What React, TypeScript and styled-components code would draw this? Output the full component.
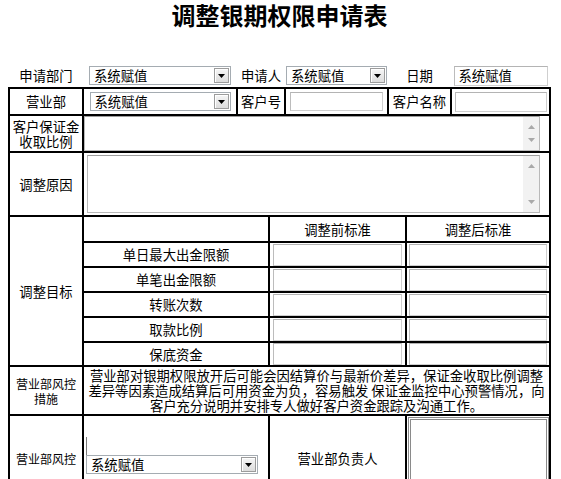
import * as React from 'react';
import styled, { createGlobalStyle } from 'styled-components';

const GlobalStyle = createGlobalStyle`
  html, body {
    margin: 0;
    padding: 0;
    background: #fff;
  }
  body {
    font-family: "Noto Sans CJK SC", "Liberation Sans", sans-serif;
    font-size: 13.33px;
    color: #000;
  }
`;

const SIX_COLS = '74px 154px 48px 103px 63px 99px';
const FOUR_COLS = '74px 186px 137px 144px';
const TWO_COLS = '74px 467px';

const StyledPage = styled.div`
  width: 543px;
  padding: 3px 8px 0;
`;

const StyledTitle = styled.h1`
  margin: 0 0 37px;
  height: 24px;
  line-height: 24px;
  font-size: 24px;
  font-weight: bold;
  text-align: center;
`;

const StyledHeadRow = styled.div`
  display: grid;
  grid-template-columns: ${SIX_COLS};
  grid-auto-rows: 23px;
  padding: 0 1px;
`;

const StyledHeadCell = styled.div`
  display: flex;
  align-items: center;
  justify-content: center;
  white-space: nowrap;
`;

const StyledSheet = styled.div`
  border: 1px solid #000;
`;

const StyledRow = styled.div<{ $cols: string; $rows: string }>`
  display: grid;
  grid-template-columns: ${(p) => p.$cols};
  grid-template-rows: ${(p) => p.$rows};
`;

const StyledCell = styled.div<{
  $justify?: 'flex-start' | 'center';
  $align?: 'flex-start' | 'center';
  $small?: boolean;
  $span?: number;
}>`
  border: 1px solid #000;
  display: flex;
  align-items: ${(p) => p.$align || 'center'};
  justify-content: ${(p) => p.$justify || 'center'};
  text-align: center;
  line-height: 15px;
  font-size: ${(p) => (p.$small ? '12px' : '13.33px')};
  min-width: 0;
  overflow: hidden;
  ${(p) => (p.$span ? `grid-row: span ${p.$span};` : '')}
`;

const StyledNotice = styled.p`
  margin: 0;
  line-height: 15px;
  white-space: nowrap;
`;

const StyledSelectBox = styled.div<{ $w: number }>`
  display: flex;
  width: ${(p) => p.$w}px;
  height: 19px;
  box-sizing: border-box;
  border: 1px solid #a5acb2;
  background: #fff;
`;

const StyledSelect = styled.select`
  flex: 1;
  min-width: 0;
  appearance: none;
  border: none;
  outline: none;
  background: transparent;
  padding: 0 0 0 4px;
  margin: 0;
  font: inherit;
  font-size: 13.33px;
  line-height: 17px;
  color: #000;
`;

const StyledDropButton = styled.span`
  width: 15px;
  margin: 1px;
  box-sizing: border-box;
  border: 1px solid #9c9c9c;
  background: linear-gradient(#f6f6f6, #dcdcdc);
  box-shadow: inset 1px 1px 0 #fff;
  display: flex;
  align-items: center;
  justify-content: center;
`;

const StyledTextField = styled.input<{ $w: number; $h: number }>`
  width: ${(p) => p.$w}px;
  height: ${(p) => p.$h}px;
  box-sizing: border-box;
  margin: 0;
  padding: 0 4px;
  border: 1px solid #cfcfcf;
  border-top-color: #b4b4b4;
  border-left-color: #bcbcbc;
  font: inherit;
  font-size: 13.33px;
  color: #000;
  outline: none;
`;

const StyledMemo = styled.div<{ $w: number; $h: number; $ml: number }>`
  display: flex;
  width: ${(p) => p.$w}px;
  height: ${(p) => p.$h}px;
  margin-left: ${(p) => p.$ml}px;
  box-sizing: border-box;
  border: 1px solid #b9b9b9;
  border-top-color: #9e9e9e;
  background: #fff;
`;

const StyledMemoInput = styled.textarea`
  flex: 1;
  border: none;
  outline: none;
  resize: none;
  overflow: hidden;
  padding: 2px;
  font: inherit;
`;

const StyledScrollTrack = styled.div`
  width: 16px;
  background: #f2f2f2;
  display: flex;
  flex-direction: column;
  align-items: center;
  justify-content: space-between;
  padding: 8px 0;
`;

const StyledPickCell = styled.div`
  display: flex;
  flex-direction: column;
  align-items: flex-start;
  width: 100%;
  padding: 0 0 5px 2px;
`;

const StyledCaret = styled.span`
  width: 1px;
  height: 18px;
  background: #7a7a7a;
`;

const StyledSignBox = styled.div`
  width: 141px;
  height: 80px;
  margin-top: 1px;
  box-sizing: border-box;
  border: 3px double #8a8a8a;
  background: #fff;
`;

const Arrow: React.FC<{ up?: boolean; color?: string }> = ({ up, color = '#000' }) => (
  <svg width="7" height="4" viewBox="0 0 7 4">
    <path d={up ? 'M0 4h7L3.5 0z' : 'M0 0h7L3.5 4z'} fill={color} />
  </svg>
);

const Select: React.FC<{ width: number }> = ({ width }) => (
  <StyledSelectBox $w={width}>
    <StyledSelect defaultValue="sys">
      <option value="sys">系统赋值</option>
    </StyledSelect>
    <StyledDropButton>
      <Arrow />
    </StyledDropButton>
  </StyledSelectBox>
);

const Memo: React.FC<{ width: number; height: number; ml: number }> = ({ width, height, ml }) => (
  <StyledMemo $w={width} $h={height} $ml={ml}>
    <StyledMemoInput />
    <StyledScrollTrack>
      <Arrow up color="#a9a9a9" />
      <Arrow color="#a9a9a9" />
    </StyledScrollTrack>
  </StyledMemo>
);

const TARGETS = ['单日最大出金限额', '单笔出金限额', '转账次数', '取款比例', '保底资金'];

export default function App() {
  return (
    <StyledPage>
      <GlobalStyle />
      <StyledTitle>调整银期权限申请表</StyledTitle>

      <StyledHeadRow>
        <StyledHeadCell>申请部门</StyledHeadCell>
        <StyledHeadCell>
          <Select width={142} />
        </StyledHeadCell>
        <StyledHeadCell>申请人</StyledHeadCell>
        <StyledHeadCell>
          <Select width={101} />
        </StyledHeadCell>
        <StyledHeadCell>日期</StyledHeadCell>
        <StyledHeadCell>
          <StyledTextField $w={94} $h={20} defaultValue="系统赋值" />
        </StyledHeadCell>
      </StyledHeadRow>

      <StyledSheet>
        <StyledRow $cols={SIX_COLS} $rows="27px">
          <StyledCell>营业部</StyledCell>
          <StyledCell>
            <Select width={141} />
          </StyledCell>
          <StyledCell>客户号</StyledCell>
          <StyledCell>
            <StyledTextField $w={93} $h={19} />
          </StyledCell>
          <StyledCell>客户名称</StyledCell>
          <StyledCell>
            <StyledTextField $w={92} $h={20} />
          </StyledCell>
        </StyledRow>

        <StyledRow $cols={TWO_COLS} $rows="37px">
          <StyledCell>
            客户保证金
            <br />
            收取比例
          </StyledCell>
          <StyledCell $justify="flex-start">
            <Memo width={456} height={35} ml={0} />
          </StyledCell>
        </StyledRow>

        <StyledRow $cols={TWO_COLS} $rows="64px">
          <StyledCell>调整原因</StyledCell>
          <StyledCell $justify="flex-start">
            <Memo width={453} height={58} ml={3} />
          </StyledCell>
        </StyledRow>

        <StyledRow $cols={FOUR_COLS} $rows="26px 25px 25px 25px 25px 24px">
          <StyledCell $span={6}>调整目标</StyledCell>
          <StyledCell />
          <StyledCell>调整前标准</StyledCell>
          <StyledCell>调整后标准</StyledCell>
          {TARGETS.map((name) => (
            <React.Fragment key={name}>
              <StyledCell>{name}</StyledCell>
              <StyledCell>
                <StyledTextField $w={129} $h={22} />
              </StyledCell>
              <StyledCell>
                <StyledTextField $w={138} $h={22} />
              </StyledCell>
            </React.Fragment>
          ))}
        </StyledRow>

        <StyledRow $cols={TWO_COLS} $rows="49px">
          <StyledCell $small>
            营业部风控
            <br />
            措施
          </StyledCell>
          <StyledCell>
            <StyledNotice>
              营业部对银期权限放开后可能会因结算价与最新价差异，保证金收取比例调整
              <br />
              差异等因素造成结算后可用资金为负，容易触发 保证金监控中心预警情况，向
              <br />
              客户充分说明并安排专人做好客户资金跟踪及沟通工作。
            </StyledNotice>
          </StyledCell>
        </StyledRow>

        <StyledRow $cols={FOUR_COLS} $rows="86px">
          <StyledCell $small>营业部风控</StyledCell>
          <StyledCell $justify="flex-start">
            <StyledPickCell>
              <StyledCaret />
              <Select width={172} />
            </StyledPickCell>
          </StyledCell>
          <StyledCell>营业部负责人</StyledCell>
          <StyledCell $align="flex-start">
            <StyledSignBox />
          </StyledCell>
        </StyledRow>
      </StyledSheet>
    </StyledPage>
  );
}
